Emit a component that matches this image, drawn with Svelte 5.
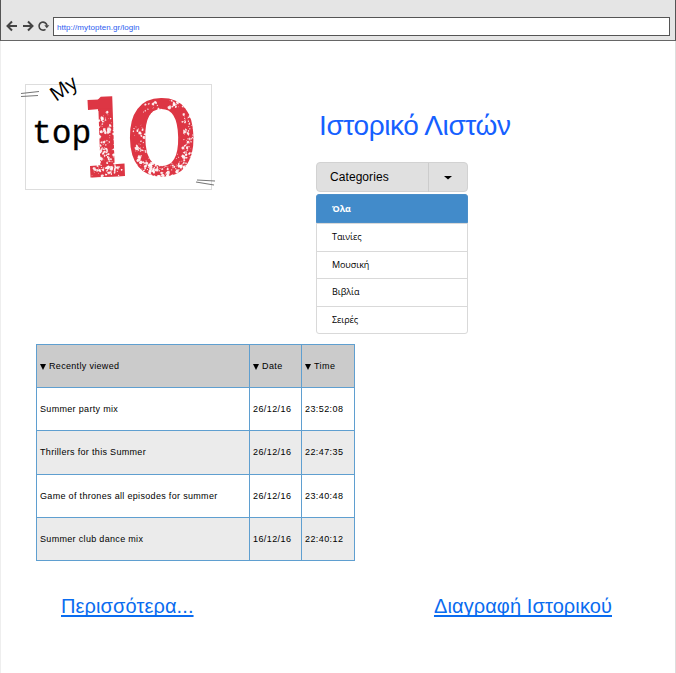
<script>
  const categories = ['Όλα', 'Ταινίες', 'Μουσική', 'Βιβλία', 'Σειρές'];
  const rows = [
    ['Summer party mix', '26/12/16', '23:52:08'],
    ['Thrillers for this Summer', '26/12/16', '22:47:35'],
    ['Game of thrones all episodes for summer', '26/12/16', '23:40:48'],
    ['Summer club dance mix', '16/12/16', '22:40:12']
  ];

  // Seeded noise gives the stamp its worn ink.
  let seed = 41;
  function rnd() {
    seed = (seed * 16807) % 2147483647;
    return seed / 2147483647;
  }
  const clusters = [
    [87, 66, 8, 22, 75], [86, 84, 9, 12, 55], [86, 44, 5, 8, 16], [87, 96, 15, 5, 50],
    [128, 86, 12, 11, 75], [146, 95, 18, 7, 85], [164, 86, 9, 9, 50], [169, 62, 6, 18, 55],
    [118, 63, 7, 14, 30], [154, 28, 5, 5, 22], [132, 33, 9, 6, 20], [168, 40, 6, 9, 20]
  ];
  const specks = clusters.flatMap(([cx, cy, rx, ry, n]) =>
    Array.from({ length: n }, () => {
      const x = cx + (rnd() * 2 - 1) * rx;
      const y = cy + (rnd() * 2 - 1) * ry;
      const r = 0.4 + rnd() * rnd() * 2;
      const pts = Array.from({ length: 6 }, (_, i) => {
        const a = (i * Math.PI) / 3;
        const d = r * (0.5 + rnd() * 0.8);
        return `${(x + Math.cos(a) * d).toFixed(1)},${(y + Math.sin(a) * d).toFixed(1)}`;
      });
      return pts.join(' ');
    })
  );
</script>

<div class="window">
  <header>
    <svg class="nav" width="44" height="16" viewBox="0 0 44 16" fill="none" stroke="#444" stroke-width="2">
      <path d="M11 8H2M6 3.500L1.500 8L6 12.500" />
      <path d="M17 8h9M22 3.500L26.500 8L22 12.500" />
      <path d="M39.500 11.300A4 4 0 1 1 41 7.500" stroke-width="1.600" />
      <path d="M38.300 7.300h5l-2.500 3z" fill="#444" stroke="none" />
    </svg>
    <div class="address">http://mytopten.gr/login</div>
  </header>

  <main>
    <section class="top">
      <svg class="logo" width="200" height="120" viewBox="0 0 200 120">
        <rect x="5.500" y="9.500" width="186" height="105" fill="#fff" stroke="#ddd" />
        <g fill="#dd3644" stroke="#dd3644">
          <text class="one" transform="translate(63.500 101) rotate(-2) scale(.64 1)" font-size="104" stroke-width="3">1</text>
          <text class="zero" transform="translate(104.500 99.500) rotate(-1) scale(1.190 1)" font-size="100" stroke-width="3">0</text>
        </g>
        <!-- Slab ends and straight shaft edge of the stamp's first digit -->
        <path d="M64 34h14v54H66z" fill="#fff" />
        <path d="M67.500 25L91 24L91.500 33L68 35zM70 91L104.500 88.500L105 101L70.500 102.500z" fill="#dd3644" />
        <text class="mono" x="12" y="68" font-size="33">top</text>
        {#each specks as points}
          <polygon {points} fill="#fff" opacity=".9" />
        {/each}
        <text class="my" transform="translate(36 27) rotate(-35)" font-size="20">My</text>
        <g stroke="#777" stroke-width="1.100">
          <path d="M1 18.500L19 16.500M1 21.500L18 20.500" />
          <path d="M177 105L195 106M176 107L194 110" />
        </g>
      </svg>

      <div class="side">
        <h1>Ιστορικό Λιστών</h1>
        <button class="select">
          <span class="label">Categories</span>
          <span class="toggle"><svg width="8" height="4" viewBox="0 0 8 4"><path d="M0 0h8L4 3.500z" /></svg></span>
        </button>
        <ul>
          {#each categories as name, i}
            <li class:active={i === 0}>{name}</li>
          {/each}
        </ul>
      </div>
    </section>

    <table>
      <thead>
        <tr>
          {#each ['Recently viewed', 'Date', 'Time'] as title}
            <th><svg width="6" height="6" viewBox="0 0 6 6"><path d="M0 0h6L3 6z" /></svg>{title}</th>
          {/each}
        </tr>
      </thead>
      <tbody>
        {#each rows as row}
          <tr>{#each row as cell}<td>{cell}</td>{/each}</tr>
        {/each}
      </tbody>
    </table>

    <footer>
      <a href="#more">Περισσότερα...</a>
      <a href="#clear">Διαγραφή Ιστορικού</a>
    </footer>
  </main>
</div>

<style>
  .window {
    box-sizing: border-box;
    width: 676px;
    height: 673px;
    overflow: hidden;
    background: #fff;
    font-family: 'Liberation Sans', Arial, sans-serif;
    color: #000;
  }
  header {
    box-sizing: border-box;
    height: 41px;
    padding: 17px 5px 4px 5px;
    display: flex;
    background: #e5e5e5;
    border: 1px solid #555;
    border-top: 0;
    border-bottom-color: #666;
  }
  .nav { margin-top: 1px; flex: none; }
  .address {
    box-sizing: border-box;
    flex: 1;
    height: 19px;
    margin-left: 3px;
    padding-left: 3px;
    border: 1px solid #555;
    background: #fff;
    color: #2b5cf0;
    font-size: 8px;
    letter-spacing: 0.05px;
    line-height: 19px;
  }
  main {
    box-sizing: border-box;
    height: 632px;
    padding: 34px 0 0;
    border-left: 1px solid #eee;
    border-right: 1px solid #ddd;
  }
  .top { display: flex; height: 269px; padding-left: 19px; }
  .logo { flex: none; overflow: visible; }
  .mono { font-family: 'Liberation Mono', monospace; stroke: #000; stroke-width: 0.3px; }
  .one { font-family: 'DejaVu Serif', serif; font-weight: 700; }
  .zero { font-family: 'DejaVu Sans', sans-serif; }
  .my { font-family: 'Open Sans', sans-serif; }
  .side { margin-left: 96px; padding-top: 34px; width: 152px; }
  h1 {
    margin: 0 0 0 3px;
    height: 53px;
    font-size: 28px;
    line-height: 34px;
    font-weight: 400;
    letter-spacing: -0.4px;
    color: #1660ff;
    white-space: nowrap;
  }
  .select {
    box-sizing: border-box;
    display: flex;
    width: 152px;
    height: 30px;
    padding: 0;
    border: 1px solid #d2d2d2;
    border-radius: 4px;
    background: #e0e0e0;
    font: 12px 'Liberation Sans', Arial, sans-serif;
    letter-spacing: 0.07px;
    color: #000;
    text-align: left;
  }
  .label { flex: 1; padding-left: 13px; line-height: 28px; }
  .toggle {
    display: flex;
    width: 38px;
    height: 29px;
    align-items: center;
    justify-content: center;
    border-left: 1px solid #ccc;
  }
  ul {
    box-sizing: border-box;
    list-style: none;
    margin: 2px 0 0;
    padding: 0;
    height: 140px;
    border: 1px solid #d9d9d9;
    border-radius: 3px;
    display: flex;
    flex-direction: column;
    font: 9px 'Open Sans', sans-serif;
    letter-spacing: -0.07px;
  }
  li {
    box-sizing: border-box;
    flex: 1;
    padding-left: 15px;
    line-height: 26px;
    border-top: 1px solid #d9d9d9;
  }
  li.active {
    margin: -1px -1px 0;
    padding-left: 15px;
    border: 1px solid #4b8fca;
    border-radius: 3px 3px 0 0;
    background: #428bca;
    color: #fff;
    font-weight: 700;
    line-height: 27px;
  }
  table {
    margin-left: 35px;
    width: 319px;
    height: 217px;
    table-layout: fixed;
    border-collapse: collapse;
    font-size: 9px;
    letter-spacing: 0.42px;
  }
  th, td {
    box-sizing: border-box;
    height: 43.2px;
    padding: 0 0 0 3px;
    border: 1px solid #5f9fd0;
    text-align: left;
    font-weight: 400;
    white-space: nowrap;
  }
  th { background: #cbcbcb; }
  th:nth-child(1) { width: 213px; }
  th:nth-child(2) { width: 52px; }
  th:first-child, td:first-child { letter-spacing: 0.32px; }
  th svg { margin-right: 3px; vertical-align: -1px; }
  tbody tr:nth-child(even) { background: #ebebeb; }
  footer {
    display: flex;
    justify-content: space-between;
    padding: 33px 63px 0 60px;
    font-size: 20px;
    letter-spacing: 0.1px;
    line-height: 24px;
  }
  a { color: #0a6cf0; text-decoration: underline; text-decoration-thickness: 2px; text-underline-offset: 2px; text-decoration-skip-ink: none; }
</style>
